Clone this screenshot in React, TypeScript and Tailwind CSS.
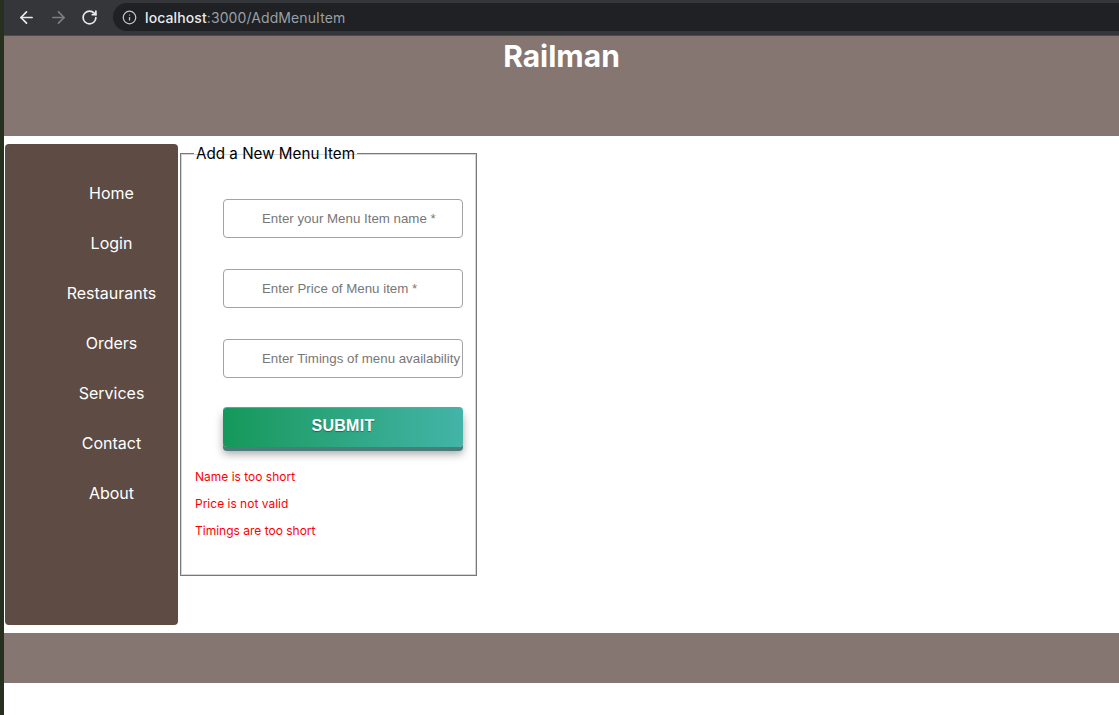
import React from 'react';
import { ArrowLeft, ArrowRight, RotateCw, Info } from 'lucide-react';

const navItems = ['Home', 'Login', 'Restaurants', 'Orders', 'Services', 'Contact', 'About'];

const fields = [
  'Enter your Menu Item name *',
  'Enter Price of Menu item *',
  'Enter Timings of menu availability',
];

const errors = ['Name is too short', 'Price is not valid', 'Timings are too short'];

function BrowserBar() {
  return (
    <div className="h-[36px] bg-[#35363a] border-b border-[#4a4b4f] flex items-start pt-[3px]">
      <div className="flex items-center h-[28px] pl-[13px] gap-[13px] text-[#e8eaed]">
        <ArrowLeft size={19} strokeWidth={2.2} />
        <ArrowRight size={19} strokeWidth={2.2} className="text-[#7c7e82]" />
        <RotateCw size={17} strokeWidth={2.4} />
      </div>
      <div className="ml-[15px] flex-1 h-[28px] rounded-l-full bg-[#202124] flex items-center pl-[9px] gap-[8px]">
        <Info size={15} strokeWidth={2} className="text-[#c4c7c5]" />
        <span className="text-[14px] font-['Inter',sans-serif] tracking-[0.1px]">
          <span className="text-[#e8eaed] font-medium">localhost</span>
          <span className="text-[#9aa0a6]">:3000/AddMenuItem</span>
        </span>
      </div>
    </div>
  );
}

export default function App() {
  return (
    <div className="w-[1119px] h-[715px] flex bg-white overflow-hidden">
      <div className="w-[4px] bg-[#27301f]" />
      <div className="flex-1 flex flex-col">
        <BrowserBar />
        <header className="h-[100px] bg-[#857672]">
          <h1 className="text-center text-white font-bold text-[30px] leading-[40px] font-['Inter',sans-serif]">Railman</h1>
        </header>

        <main className="h-[497px] flex items-start">
          <nav className="mt-[8px] ml-[1px] w-[173px] h-[481px] bg-[#5e4b43] rounded-[4px] pt-[24px] pl-[40px] font-['Inter',sans-serif]">
            {navItems.map(item => (
              <div key={item} className="h-[50px] flex items-center justify-center text-white text-[16px]">{item}</div>
            ))}
          </nav>

          <fieldset className="mt-[7px] ml-[2px] w-[295px] h-[433px] border border-[#787878] shadow-[inset_0_0_0_1px_#d6d6d6] px-[13px] m-0">
            <legend className="px-[2px] text-[15.2px] leading-[21px] text-black font-['Inter',sans-serif]">Add a New Menu Item</legend>
            <form className="flex flex-col pt-[35px]" onSubmit={e => e.preventDefault()}>
              {fields.map(f => (
                <input
                  key={f}
                  placeholder={f}
                  className="ml-[29px] mb-[31px] w-[240px] h-[39px] border border-[#a3a3a3] rounded-[4px] pl-[38px] pr-0 text-[13.3px] font-['Liberation_Sans',sans-serif] placeholder:text-[#777] outline-none"
                />
              ))}
              <button
                type="submit"
                className="ml-[29px] -mt-[2px] w-[240px] h-[40px] rounded-[4px] bg-gradient-to-r from-[#14985a] to-[#43b4a8] border-t border-[#3fb0c0] text-white font-bold text-[16px] tracking-[0.3px] font-['Liberation_Sans',sans-serif] [text-shadow:0_1px_1px_rgba(0,0,0,0.35)] shadow-[0_4px_0_#4a7d7a,0_7px_8px_rgba(0,0,0,0.35)] pb-[3px]"
              >
                SUBMIT
              </button>
              <div className="mt-[16px] ml-[1px] flex flex-col font-['Inter',sans-serif]">
                {errors.map(e => (
                  <div key={e} className="h-[27px] flex items-center text-[12px] text-[#ff0000]">{e}</div>
                ))}
              </div>
            </form>
          </fieldset>
        </main>

        <footer className="h-[50px] bg-[#857672]" />
      </div>
    </div>
  );
}
